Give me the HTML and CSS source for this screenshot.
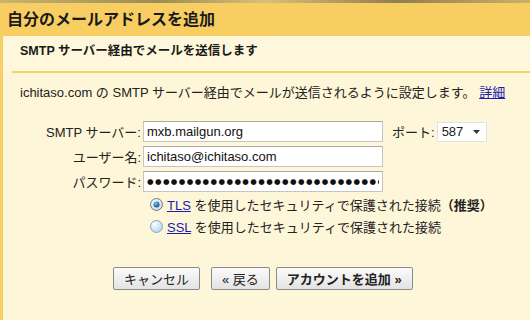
FILE: index.html
```html
<!DOCTYPE html>
<html lang="ja">
<head>
<meta charset="utf-8">
<title>自分のメールアドレスを追加</title>
<link rel="stylesheet" href="styles.css">
</head>
<body>
<div class="topline"></div>
<header class="header"><h1 class="title">自分のメールアドレスを追加</h1></header>
<main class="frame">
  <div class="sub">SMTP サーバー経由でメールを送信します</div>
  <div class="rule"></div>
  <div class="content">
    <p class="intro">ichitaso.com の SMTP サーバー経由でメールが送信されるように設定します。 <a href="#" class="link">詳細</a></p>
    <div class="form">
      <label class="lbl">SMTP サーバー:</label>
      <input class="field" type="text" value="mxb.mailgun.org" readonly>
      <span class="port-lbl">ポート:</span>
      <div class="select"><span>587</span><svg width="7" height="4" viewBox="0 0 7 4"><path d="M0 0h7L3.5 4z" fill="#333"/></svg></div>
      <label class="lbl">ユーザー名:</label>
      <input class="field" type="text" value="ichitaso@ichitaso.com" readonly>
      <span></span><span></span>
      <label class="lbl">パスワード:</label>
      <input class="field pw" type="text" value="●●●●●●●●●●●●●●●●●●●●●●●●●●●●●●●" readonly>
      <span></span><span></span>
    </div>
    <div class="radios">
      <div class="radio-row">
        <svg class="radio" width="13" height="13" viewBox="0 0 13 13">
          <defs>
            <radialGradient id="rg1" cx="0.4" cy="0.35" r="0.7"><stop offset="0" stop-color="#ffffff"/><stop offset="1" stop-color="#c9d3dc"/></radialGradient>
            <radialGradient id="dot" cx="0.4" cy="0.35" r="0.7"><stop offset="0" stop-color="#7fd3f5"/><stop offset="0.6" stop-color="#1f77b6"/><stop offset="1" stop-color="#154d78"/></radialGradient>
          </defs>
          <circle cx="6.5" cy="6.5" r="6" fill="url(#rg1)" stroke="#6f7f8f"/>
          <circle cx="6.5" cy="6.5" r="3" fill="url(#dot)"/>
        </svg>
        <span><a href="#" class="link">TLS</a> を使用したセキュリティで保護された接続<b>（推奨）</b></span>
      </div>
      <div class="radio-row">
        <svg class="radio" width="13" height="13" viewBox="0 0 13 13">
          <defs>
            <radialGradient id="rg2" cx="0.35" cy="0.3" r="0.8"><stop offset="0" stop-color="#ffffff"/><stop offset="1" stop-color="#a9d4ee"/></radialGradient>
          </defs>
          <circle cx="6.5" cy="6.5" r="6" fill="url(#rg2)" stroke="#8fa6ba"/>
        </svg>
        <span><a href="#" class="link">SSL</a> を使用したセキュリティで保護された接続</span>
      </div>
    </div>
    <div class="buttons">
      <button class="btn cancel" type="button">キャンセル</button>
      <button class="btn" type="button">« 戻る</button>
      <button class="btn primary" type="button">アカウントを追加 »</button>
    </div>
  </div>
</main>
</body>
</html>
```

FILE: styles.css
```css
html, body {
  margin: 0;
  padding: 0;
}
body {
  width: 530px;
  height: 320px;
  overflow: hidden;
  background: #fef6d8;
  font-family: "Liberation Sans", "Noto Sans CJK JP", sans-serif;
  font-size: 13px;
  color: #222;
}
.topline {
  height: 3px;
  background: linear-gradient(90deg, #c9b46e, #9c8b55 30%, #d7c07a 50%, #8f7f4f 75%, #c8b36b);
}
.header {
  height: 33px;
  background: #f8ce63;
  padding-left: 7px;
}
.title {
  margin: 0;
  font-size: 16px;
  line-height: 33px;
  font-weight: bold;
  color: #1a1a1a;
}
.frame {
  border-left: 3px solid #f6d067;
  background: #fef6d8;
  height: 284px;
}
.sub {
  height: 35px;
  line-height: 31px;
  padding-left: 17px;
  font-weight: bold;
  font-size: 12.5px;
  background: #fef7dc;
  color: #1a1a1a;
}
.rule {
  height: 2px;
  margin-left: 9px;
  background: #f6d26c;
}
.content {
  padding-left: 17px;
}
.intro {
  margin: 12px 0 0;
  line-height: 16px;
}
.link {
  color: #1b1bb0;
  text-decoration: underline;
}
.form {
  margin-top: 20px;
  display: grid;
  grid-template-columns: 123px 240px auto auto;
  justify-content: start;
  row-gap: 4px;
  align-items: center;
}
.lbl {
  text-align: right;
  padding-right: 2px;
  color: #222;
}
.field {
  box-sizing: border-box;
  width: 240px;
  height: 21px;
  margin: 0;
  padding: 0 3px;
  border: 1px solid #c5c5c5;
  border-top-color: #a8a8a8;
  background: #fff;
  font-family: "Liberation Sans", "Noto Sans CJK JP", sans-serif;
  font-size: 13px;
  color: #111;
  outline: none;
}
.pw {
  font-family: "DejaVu Sans", sans-serif;
  font-size: 7.5px;
  letter-spacing: 1.4px;
  color: #111;
}
.port-lbl {
  margin-left: 9px;
  padding-right: 2px;
}
.select {
  box-sizing: border-box;
  width: 50px;
  height: 20px;
  border: 1px solid #e2e2e2;
  background: #fff;
  display: flex;
  align-items: center;
  justify-content: space-between;
  padding: 0 6px 0 4px;
}
.radios {
  margin-top: 1px;
  padding-left: 130px;
}
.radio-row {
  height: 22px;
  display: flex;
  align-items: center;
  gap: 4px;
}
.radio {
  flex: none;
}
.buttons {
  margin-top: 30px;
  padding-left: 93px;
  display: flex;
}
.btn {
  height: 23px;
  padding: 0 10px;
  border: 1px solid #8a8a8a;
  border-radius: 2px;
  background: linear-gradient(#fbfbfb, #e3e3e3);
  font-family: "Liberation Sans", "Noto Sans CJK JP", sans-serif;
  font-size: 13px;
  color: #222;
  margin-right: 6px;
}
.cancel {
  margin-right: 11px;
}
.primary {
  font-weight: bold;
}
```
